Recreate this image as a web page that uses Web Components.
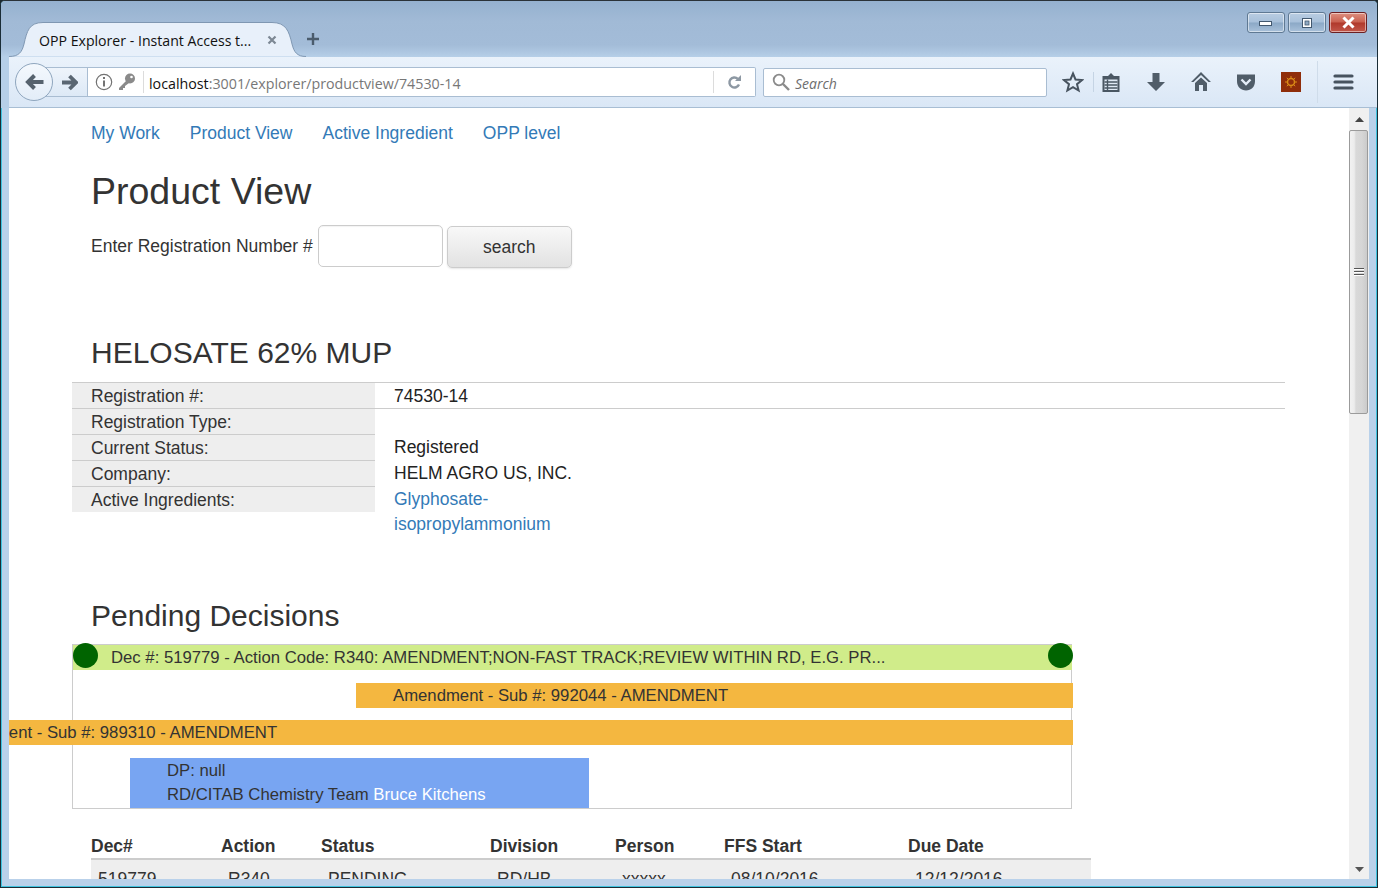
<!DOCTYPE html>
<html lang="en"><head><meta charset="utf-8"><title>OPP Explorer</title>
<style>
html,body{margin:0;padding:0;height:888px;overflow:hidden;background:#1c2a30}
body{font-family:"Liberation Sans",Arial,sans-serif;color:#333}
</style></head><body>
<browser-window>
  <tab-strip slot="chrome"></tab-strip>
  <nav-toolbar slot="chrome"></nav-toolbar>
  <app-nav></app-nav>
  <product-search></product-search>
  <detail-table></detail-table>
  <decision-timeline></decision-timeline>
  <decision-table></decision-table>
</browser-window>
<script>
function def(name, html){
  customElements.define(name, class extends HTMLElement{
    constructor(){super();this.attachShadow({mode:'open'}).innerHTML=html;}
  });
}
def('browser-window',`<style>
:host{display:flex;flex-direction:column;width:1378px;height:888px;box-sizing:border-box;border:1px solid #1a2c36;border-top-color:#2a3238;border-radius:5px 5px 0 0;overflow:hidden;background:#b9d1ea;box-shadow:inset 0 0 0 1px #3fc3df}
.chrome{display:flex;flex-direction:column;padding:1px 2px 0 1px;background:linear-gradient(#95b1cf 0,#a1bad6 20px,#a3bcd8 44px,#b6cfe8 56px)}
.body{display:flex;height:771px;margin:0 8px 0 8px;background:#fff}
.page{flex:1;min-width:0;overflow:hidden;padding-left:82px;box-sizing:border-box;font-size:17.5px;line-height:25px;color:#333}
.bar{width:20px;flex:none;display:flex;flex-direction:column;background:#f0f0f0;position:relative}
.end{height:22px;display:flex;align-items:center;justify-content:center;flex:none}
.thumb{height:284px;margin:0 1px 0 0;box-sizing:border-box;border:1px solid #9b9b9b;border-radius:2px;background:linear-gradient(90deg,#f2f2f2 0,#ececec 25%,#d9d9d9 35%,#d6d6d6 70%,#cbcbcb 100%);display:flex;align-items:center;justify-content:center}
.gap{flex:1}
</style>
<div class="chrome"><slot name="chrome"></slot></div>
<div class="body"><div class="page"><slot></slot></div>
<div class="bar">
 <div class="end"><svg width="9" height="5" viewBox="0 0 9 5"><path d="M4.500 0L9 5H0z" fill="#444"/></svg></div>
 <div class="thumb"><svg width="10" height="10" viewBox="0 0 10 10"><path d="M0 1.500H10M0 4.500H10M0 7.500H10" stroke="#555" fill="none"/><path d="M0 2.500H10M0 5.500H10M0 8.500H10" stroke="#fff" fill="none"/></svg></div>
 <div class="gap"></div>
 <div class="end" style="height:20px"><svg width="9" height="5" viewBox="0 0 9 5"><path d="M0 0H9L4.500 5z" fill="#555"/></svg></div>
</div></div>`);

def('tab-strip',`<style>
:host{display:flex;align-items:flex-end;height:55px;position:relative;padding-left:7px;box-sizing:border-box;font-family:"Open Sans","Liberation Sans",sans-serif}
.tab{width:297px;height:35px;position:relative;display:flex;align-items:center;padding:2px 0 0 30px;box-sizing:border-box;flex:none}
.tab svg.bg{position:absolute;left:0;top:0}
.t{position:relative;font-size:14.13px;color:#111;width:212px;white-space:nowrap}
.x{position:relative;margin:-2px 0 0 16px;width:10px;height:10px;display:block}
.plus{margin:0 0 11px 0;display:block}
.sp{flex:1}
.ctl{display:flex;gap:3px;align-self:flex-start;margin:10px 8px 0 0}
.b{width:38px;height:21px;box-sizing:border-box;border:1px solid #5f7993;border-radius:3px;box-shadow:inset 0 0 0 1px rgba(255,255,255,.5);background:linear-gradient(#b9cde2 0,#a8c0da 48%,#8ba8c6 52%,#a9c1da 100%);display:flex;align-items:center;justify-content:center}
.c{border-color:#6b1f22;background:linear-gradient(#dd8f80 0,#c9604f 48%,#b0392b 52%,#c2574a 100%)}
</style>
<div class="tab">
<svg class="bg" width="297" height="35" viewBox="0 0 297 35"><path d="M0 34.500C10 34.500 13 30 15 22C18 9 20 .5 34 .5H263C277 .5 280 9 283 22C285 30 288 34.500 297 34.500" fill="#e8f0fa" stroke="#7f97b2"/></svg>
<span class="t">OPP Explorer - Instant Access t...</span>
<svg class="x" viewBox="0 0 10 10"><path d="M1.500 1.500L8.500 8.500M8.500 1.500L1.500 8.500" stroke="#7d8894" stroke-width="2.200"/></svg>
</div>
<svg class="plus" width="14" height="14" viewBox="0 0 14 14"><path d="M7 1V13M1 7H13" stroke="#4b5c6d" stroke-width="2.400"/></svg>
<div class="sp"></div>
<div class="ctl">
<div class="b"><svg width="14" height="9" viewBox="0 0 14 9"><rect x=".5" y="3.500" width="12" height="4" fill="#fff" stroke="#42586f"/></svg></div>
<div class="b"><svg width="12" height="12" viewBox="0 0 12 12"><rect x="1.500" y="1.500" width="9" height="9" fill="#fff" stroke="#42586f"/><rect x="4" y="4" width="4" height="4" fill="#8fa8c2" stroke="#42586f" stroke-width=".8"/></svg></div>
<div class="b c"><svg width="15" height="13" viewBox="0 0 15 13"><path d="M2.500 1.500L12.500 11.500M12.500 1.500L2.500 11.500" stroke="#fff" stroke-width="3"/></svg></div>
</div>`);

def('nav-toolbar',`<style>
:host{display:flex;align-items:center;height:51px;box-sizing:border-box;margin:0 -2px 0 7px;background:linear-gradient(#eaf2fb,#dae7f6);border-bottom:1px solid #a8bed4;position:relative;font-family:"Open Sans","Liberation Sans",sans-serif}
.nav{display:flex;align-items:center;position:relative;height:30px;margin-left:6px;flex:none}
.backc{width:38px;height:38px;border-radius:50%;border:1px solid #8fa6be;background:linear-gradient(#f4f8fd,#e3edf8);display:flex;align-items:center;justify-content:center;position:relative;z-index:1;flex:none;box-sizing:border-box;padding-left:2px}
.fw{width:45px;margin-left:-10px;height:30px;box-sizing:border-box;padding-left:18px;border:1px solid #a9bdd2;border-left:0;background:linear-gradient(#eef4fb,#dde9f6);display:flex;align-items:center;flex:none}
.url{width:668px;height:30px;box-sizing:border-box;flex:none;background:#fff;border:1px solid #a9bdd2;border-left:0;border-radius:0 2px 2px 0;display:flex;align-items:center}
.url .l{display:flex;gap:4px;align-items:center;width:56px;padding-left:7px;box-sizing:border-box;height:22px;border-right:1px solid #dcdcdc;flex:none}
.txt{flex:1;padding:3px 0 0 5px;font-size:14.26px;color:#777;white-space:nowrap}
.txt b{font-weight:400;color:#111}
.re{width:41px;height:22px;border-left:1px solid #dcdcdc;display:flex;align-items:center;justify-content:center;flex:none}
.search{width:284px;height:29px;margin-left:7px;box-sizing:border-box;flex:none;background:#fff;border:1px solid #a9bdd2;border-radius:2px;display:flex;align-items:center;padding-left:8px;gap:5px;font-style:italic;color:#6d6d6d;font-size:14px}
.search span{padding-top:2px}
.ic{flex:none;display:block}
.sep{width:1px;height:20px;background:#c5d4e4;flex:none}
.seplong{width:1px;height:42px;background:#cfdcea;flex:none}
</style>
<div class="nav"><div class="backc"><svg width="20" height="18" viewBox="0 0 20 18"><path d="M9.500 2.500L3 9L9.500 15.500M3.500 9H18.500" fill="none" stroke="#56626e" stroke-width="4"/></svg></div>
<div class="fw"><svg width="17" height="17" viewBox="0 0 17 17"><path d="M8.500 2L15 8.500L8.500 15M14.500 8.500H1" fill="none" stroke="#5a6672" stroke-width="3.800"/></svg></div></div>
<div class="url"><div class="l">
<svg width="18" height="18" viewBox="0 0 18 18"><circle cx="9" cy="9" r="7.700" fill="none" stroke="#737373" stroke-width="1.200"/><rect x="8" y="7.500" width="2" height="6" fill="#737373"/><rect x="8" y="4" width="2" height="2" fill="#737373"/></svg>
<svg width="19" height="18" viewBox="0 0 19 18"><circle cx="13" cy="5.500" r="5" fill="#8a8a8a"/><path d="M10 7L2 15V17H6V15H8V13L12 10z" fill="#8a8a8a"/><circle cx="14.500" cy="4" r="1.300" fill="#fff"/></svg>
</div><div class="txt"><b>localhost</b>:3001/explorer/productview/74530-14</div>
<div class="re"><svg width="15" height="15" viewBox="0 0 15 15"><path d="M12 9.500A5 5 0 1 1 10.800 3.800" fill="none" stroke="#8d98a3" stroke-width="2.400"/><path d="M8 6H14V0z" fill="#8d98a3"/></svg></div></div>
<div class="search"><svg width="18" height="18" viewBox="0 0 18 18"><circle cx="7" cy="7" r="5.300" fill="none" stroke="#8b8b8b" stroke-width="1.800"/><path d="M11 11L17 17" stroke="#8b8b8b" stroke-width="2.400"/></svg><span>Search</span></div>
<svg class="ic" style="margin-left:15px" width="22" height="22" viewBox="0 0 22 22"><path d="M11 2.500L13.500 8.500L20 9L15 13.200L16.600 19.500L11 16.100L5.400 19.500L7 13.200L2 9L8.500 8.500z" fill="none" stroke="#47535f" stroke-width="2"/></svg>
<div class="sep" style="margin-left:9px"></div>
<svg class="ic" style="margin-left:8px" width="18" height="19" viewBox="0 0 18 19"><path d="M.5 3H6L9 0L12 3H17.500V19H.5z" fill="#4a5763"/><path d="M2.500 6.500H15.500V17H2.500z" fill="#dfe9f5"/><path d="M2.500 9H15.500M2.500 12H15.500M2.500 15H15.500M5.500 6.500V17" stroke="#4a5763" stroke-width="1.400"/></svg>
<svg class="ic" style="margin-left:26px" width="20" height="22" viewBox="0 0 20 22"><path d="M6.500 2H13.500V11H19L10 20L1 11H6.500z" fill="#505d69"/></svg>
<svg class="ic" style="margin-left:25px" width="20" height="20" viewBox="0 0 20 20"><path d="M10 0L0 10H2.500L10 3L17.500 10H20z" fill="#505d69"/><path d="M4 11L10 5.500L16 11V19H12V13H8V19H4z" fill="#505d69"/></svg>
<svg class="ic" style="margin-left:25px" width="20" height="20" viewBox="0 0 20 20"><path d="M1 2.500H19V9C19 15 15 18.500 10 18.500C5 18.500 1 15 1 9z" fill="#505d69"/><path d="M5.500 7.500L10 12L14.500 7.500" fill="none" stroke="#e4edf8" stroke-width="2.400"/></svg>
<svg class="ic" style="margin-left:25px" width="20" height="20" viewBox="0 0 20 20"><rect width="20" height="20" fill="#8f2d0a"/><circle cx="10" cy="10" r="3.500" fill="none" stroke="#d98a17" stroke-width="1.500"/><path d="M10 4V6M10 14V16M4 10H6M14 10H16M5.800 5.800L7.200 7.200M12.800 12.800L14.200 14.200M5.800 14.200L7.200 12.800M12.800 7.200L14.200 5.800" stroke="#d98a17"/></svg>
<div class="seplong" style="margin-left:16px"></div>
<svg class="ic" style="margin-left:15px" width="21" height="18" viewBox="0 0 21 18"><path d="M2 3H19M2 9H19M2 15H19" stroke="#47535f" stroke-width="3.200" stroke-linecap="round"/></svg>`);

def('app-nav',`<style>
:host{display:flex;gap:30px;padding-top:13px;height:25px;color:#337ab7;white-space:nowrap}
</style><span>My Work</span><span>Product View</span><span>Active Ingredient</span><span>OPP level</span>`);

def('product-search',`<style>
:host{display:block}
h1{margin:23px 0 12px;font-size:37.5px;line-height:44px;font-weight:400;color:#333}
.r{display:flex;align-items:flex-start;height:43px}
label{line-height:42px}
.i{width:125px;height:42px;box-sizing:border-box;margin-left:5px;border:1px solid #ccc;border-radius:5px;background:#fff;box-shadow:inset 0 1px 1px rgba(0,0,0,.05)}
.b{width:125px;height:42px;box-sizing:border-box;margin:1px 0 0 4px;border:1px solid #ccc;border-radius:5px;background:linear-gradient(#f8f8f8,#e2e2e2);box-shadow:0 1px 2px rgba(0,0,0,.1);display:flex;align-items:center;justify-content:center;color:#333}
</style><h1>Product View</h1><div class="r"><label>Enter Registration Number #</label><div class="i"></div><div class="b">search</div></div>`);

def('detail-table',`<style>
:host{display:block;margin-left:-19px;padding-top:67px}
h2{margin:0 0 11px 19px;font-size:30px;line-height:36px;font-weight:400;color:#333}
.g{display:flex;width:1213px;border-top:1px solid #ccc;align-items:flex-start;color:#333}
.a{width:303px;flex:none;background:#eee}
.a div{height:25px;line-height:27px;padding-left:19px;border-bottom:1px solid #ccc;}
.a div:last-child{border-bottom:0}
.v{flex:1;color:#222}
.v>div{padding-left:19px;height:26px;line-height:27px}
.v .one{border-bottom:1px solid #ccc;height:25px}
.v .blank{height:25px}
.v a{display:block;width:175px;color:#337ab7;text-decoration:none;line-height:25px;padding-top:1px}
</style>
<h2>HELOSATE 62% MUP</h2>
<div class="g"><div class="a"><div>Registration #:</div><div>Registration Type:</div><div>Current Status:</div><div>Company:</div><div>Active Ingredients:</div></div>
<div class="v"><div class="one">74530-14</div><div class="blank"></div><div>Registered</div><div>HELM AGRO US, INC.</div><div style="height:50px"><a>Glyphosate-<br>isopropylammonium</a></div></div></div>`);

def('decision-timeline',`<style>
:host{display:block;margin-left:-19px;padding-top:62px}
h2{margin:0 0 10px 19px;font-size:30px;line-height:36px;font-weight:400;color:#333}
.box{width:1000px;height:165px;box-sizing:border-box;border:1px solid #ccc;position:relative;white-space:nowrap;color:#333;font-size:16.72px}
.green{height:25px;background:#d0ec8a;padding-left:38px;line-height:25px;width:999px;box-sizing:border-box;overflow:hidden}
.o{background:#f4b740;height:25px;line-height:25px;padding-left:37px;box-sizing:border-box}
.o1{margin:13px -2px 0 283px}
.o2{margin:12px -2px 0 -168px}
.blue{margin:13px 0 0 57px;width:459px;height:50px;background:#78a5f2;padding:1px 0 0 37px;box-sizing:border-box;line-height:24px}
.blue span{color:#fff}
.dot{position:absolute;top:-2px;width:25px;height:25px;border-radius:50%;background:#006400}
</style>
<h2>Pending Decisions</h2>
<div class="box">
<div class="green">Dec #: 519779 - Action Code: R340: AMENDMENT;NON-FAST TRACK;REVIEW WITHIN RD, E.G. PR...</div>
<div class="o o1">Amendment - Sub #: 992044 - AMENDMENT</div>
<div class="o o2">Amendment - Sub #: 989310 - AMENDMENT</div>
<div class="blue">DP: null<br>RD/CITAB Chemistry Team <span>Bruce Kitchens</span></div>
<div class="dot" style="left:0"></div><div class="dot" style="right:-2px"></div>
</div>`);

def('decision-table',`<style>
:host{display:block;width:1000px;padding-top:24px}
.r{display:grid;grid-template-columns:130px 100px 169px 125px 109px 184px 183px;white-space:nowrap}
.h{font-weight:700;height:27px;border-bottom:2px solid #ccc;line-height:26px;box-sizing:border-box}
.b{background:#eee;height:40px;padding-top:7px;box-sizing:border-box;line-height:25px;color:#333}
.b span{padding-left:7px}
</style>
<div class="r h"><span>Dec#</span><span>Action</span><span>Status</span><span>Division</span><span>Person</span><span>FFS Start</span><span>Due Date</span></div>
<div class="r b"><span>519779</span><span>R340</span><span>PENDING</span><span>RD/HB</span><span>xxxxx</span><span>08/10/2016</span><span>12/12/2016</span></div>`);
</script>
</body></html>
